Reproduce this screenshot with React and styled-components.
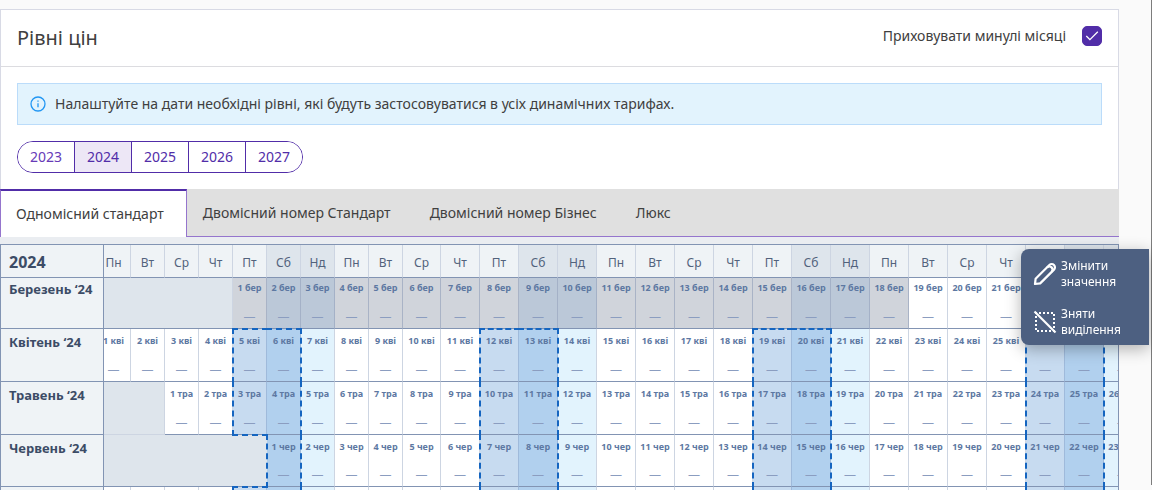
import React, { useLayoutEffect, useRef, useState } from "react";
import styled, { createGlobalStyle, css } from "styled-components";

const GlobalStyle = createGlobalStyle`
  * { box-sizing: border-box; }
  html, body { margin: 0; padding: 0; }
  body {
    background: #fafafa;
    color: #404040;
    font-family: "Noto Sans", "Open Sans", sans-serif;
    font-size: 14px;
    line-height: 20px;
  }
  button { font: inherit; cursor: pointer; }
`;

const line = "#8294b3";
const softLine = "#cdd5e2";
const purple = "#512da8";
const dash = "#1565c0";

const Page = styled.div`
  position: relative;
  height: 100vh;
  overflow: hidden;
  padding: 9px 33px 0 0;
  &::after {
    content: "";
    position: absolute;
    top: 0;
    right: 0;
    bottom: 5px;
    width: 1px;
    background: #7d7d7d;
  }
`;

const Panel = styled.section`
  background: #fff;
  border: 1px solid #d8dae5;
  border-bottom: 0;
`;

const PanelHeader = styled.header`
  display: flex;
  align-items: center;
  justify-content: space-between;
  height: 57px;
  padding: 0 16px;
  border-bottom: 1px solid #dcdce0;
`;

const Title = styled.h1`
  margin: 0;
  font-size: 20px;
  line-height: 28px;
  font-weight: 400;
`;

const CheckLabel = styled.label`
  display: flex;
  align-items: center;
  gap: 16px;
  padding-bottom: 4px;
`;

const CheckBox = styled.span`
  position: relative;
  display: flex;
  width: 20px;
  height: 20px;
  svg {
    position: absolute;
    inset: 0;
    pointer-events: none;
  }
`;

const CheckInput = styled.input`
  appearance: none;
  width: 20px;
  height: 20px;
  margin: 0;
  border: 1px solid ${purple};
  border-radius: 5px;
  background: #fff;
  &:checked { background: ${purple}; }
`;

const PanelBody = styled.div`
  display: flex;
  flex-direction: column;
  align-items: flex-start;
  gap: 16px;
  padding: 16px;
`;

const Notice = styled.p`
  display: flex;
  align-items: center;
  gap: 8px;
  align-self: stretch;
  margin: 0;
  min-height: 42px;
  padding: 0 11px;
  background: #e2f3fd;
  border: 1px solid #bbdcfa;
`;

const Years = styled.div`
  display: flex;
  height: 32px;
  border: 1px solid ${purple};
  border-radius: 16px;
  overflow: hidden;
`;

const YearButton = styled.button`
  width: 57px;
  padding: 0;
  border: 0;
  border-right: 1px solid ${purple};
  background: ${(p) => (p.$active ? "#ede7f6" : "#fff")};
  color: ${(p) => (p.$dim ? "#673ab7" : purple)};
  &:last-child { border-right: 0; width: 56px; }
`;

const Tabs = styled.div`
  display: flex;
  height: 48px;
  margin: 0 -1px;
  background: #e0e0e0;
`;

const Tab = styled.button`
  padding: 0 23px 0 16px;
  border: 0;
  border-bottom: 1px solid #9575cd;
  background: transparent;
  color: #404040;
  white-space: nowrap;
  ${(p) =>
    p.$active &&
    css`
      padding: 0 22px 0 15px;
      background: #fff;
      border: 1px solid #9575cd;
      border-top: 2px solid ${purple};
      border-bottom: 0;
    `}
`;

const TabRest = styled.div`
  flex: 1;
  border-bottom: 1px solid #9575cd;
`;

const Calendar = styled.div`
  margin: 0 -1px;
  padding-top: 7px;
  background: #eaedf1;
`;

const Scroller = styled.div`
  overflow: hidden;
  border: 1px solid ${line};
  border-bottom: 0;
`;

const Grid = styled.table`
  table-layout: fixed;
  width: max-content;
  border-collapse: separate;
  border-spacing: 0;
  background: #fff;
`;

const Col = styled.col`
  width: ${(p) => p.$width}px;
`;

const Corner = styled.th`
  position: sticky;
  left: 0;
  z-index: 2;
  height: 33px;
  padding: 2px 8px 0;
  background: #eff3f6;
  border-right: 1px solid ${line};
  border-bottom: 1px solid ${line};
  color: #3c4c66;
  font-size: 16px;
  text-align: left;
`;

const WeekDay = styled.th`
  height: 33px;
  padding: 4px 0 0;
  background: ${(p) => (p.$weekend ? "#dee5ec" : "#eff3f6")};
  border-right: 1px solid ${softLine};
  border-bottom: 1px solid ${line};
  color: #52627c;
  font-size: 12px;
  font-weight: 400;
`;

const MonthName = styled.th`
  position: sticky;
  left: 0;
  z-index: 2;
  height: ${(p) => p.$height}px;
  padding: ${(p) => p.$top}px 0 0 8px;
  background: #eff3f6;
  border-right: 1px solid ${line};
  border-bottom: 1px solid ${line};
  color: #3c4c66;
  font-size: 13px;
  line-height: 20px;
  text-align: left;
  vertical-align: top;
  white-space: nowrap;
`;

const Blank = styled.td`
  padding: 0;
  background: #dee5ec;
  border-right: ${(p) => (p.$edge ? 1 : 0)}px solid ${softLine};
  border-bottom: 1px solid ${(p) => (p.$soft ? softLine : line)};
`;

const tones = {
  plain: "#fff",
  sunday: "#e2f3fd",
  past: "#d0d4db",
  pastWeekend: "#bbc8d8",
  picked: "#c7dbf0",
  pickedWeekend: "#b1d0ee",
};
const toneLines = {
  plain: softLine,
  sunday: softLine,
  past: "#a9b3c6",
  pastWeekend: "#a4b1c7",
  picked: "#9fbadb",
  pickedWeekend: "#9fbadb",
};

const Day = styled.td`
  position: relative;
  height: ${(p) => p.$height}px;
  padding: ${(p) => p.$top}px 0 3px;
  background: ${(p) => tones[p.$tone]};
  border-right: 1px solid ${(p) => toneLines[p.$tone]};
  border-bottom: 1px solid ${line};
  text-align: center;
  vertical-align: top;
  &::after {
    content: "";
    position: absolute;
    z-index: 1;
    inset: -1px -2px -2px -1px;
    pointer-events: none;
    border: 0 dashed ${dash};
    border-left-width: ${(p) => (p.$left ? 2 : 0)}px;
    border-right-width: ${(p) => (p.$right ? 2 : 0)}px;
    border-top-width: ${(p) => (p.$first ? 2 : 0)}px;
    border-bottom-width: ${(p) => (p.$last ? 2 : 0)}px;
  }
`;

const DayButton = styled.button`
  display: flex;
  flex-direction: column;
  align-items: center;
  justify-content: space-between;
  width: 100%;
  height: ${(p) => p.$height}px;
  padding: 0;
  border: 0;
  background: none;
  color: #5d78a2;
  font-size: 9px;
  line-height: 12px;
  font-weight: 700;
  white-space: nowrap;
`;

const Level = styled.span`
  color: #8b9dc0;
  font-size: 12px;
  line-height: 16px;
  font-weight: 400;
`;

const Menu = styled.aside`
  position: absolute;
  z-index: 3;
  top: 249px;
  right: 3px;
  display: flex;
  flex-direction: column;
  gap: 16px;
  width: 128px;
  padding: 9px 0 7px 12px;
  background: #4d6081;
  border-radius: 8px 0 0 8px;
  box-shadow: 0 4px 16px rgba(0, 0, 0, 0.3);
`;

const MenuButton = styled.button`
  display: flex;
  align-items: center;
  gap: 4px;
  padding: 0;
  border: 0;
  background: none;
  color: #fff;
  font-size: 12px;
  line-height: 16px;
  text-align: left;
  svg { flex: none; }
`;

const names = ["Пн", "Вт", "Ср", "Чт", "Пт", "Сб", "Нд"];
const columns = Array.from({ length: 28 }, (_, i) => ({
  name: names[i % 7],
  weekday: i % 7,
  width: i < 9 ? 34 : i === 9 ? 38 : 39,
}));

const months = [
  { label: "Березень ‘24", short: "бер", start: 4, days: 31, past: 18, height: 51, top: 4 },
  { label: "Квітень ‘24", short: "кві", start: 0, days: 30, past: 0, height: 53, top: 6 },
  { label: "Травень ‘24", short: "тра", start: 2, days: 31, past: 0, height: 53, top: 6 },
  { label: "Червень ‘24", short: "чер", start: 5, days: 30, past: 0, height: 52, top: 6 },
  { label: "Липень ‘24", short: "лип", start: 0, days: 31, past: 0, height: 53, top: 6 },
];

const exists = (row, col) => {
  const m = months[row];
  return Boolean(m) && col >= m.start && col < m.start + m.days;
};
const isPicked = (row, col) =>
  row > 0 && exists(row, col) && (col % 7 === 4 || col % 7 === 5);

function toneOf(month, row, col) {
  const day = col - month.start + 1;
  const weekday = col % 7;
  if (day <= month.past) return weekday > 4 ? "pastWeekend" : "past";
  if (isPicked(row, col)) return weekday === 5 ? "pickedWeekend" : "picked";
  return weekday > 4 ? "sunday" : "plain";
}

function MonthRow({ month, row }) {
  return (
    <tr>
      <MonthName scope="row" $height={month.height} $top={month.top - 3}>
        {month.label}
      </MonthName>
      {month.start > 0 && (
        <Blank colSpan={month.start} $edge={row !== 3} $soft={row === 2} />
      )}
      {columns.slice(month.start, month.start + month.days).map((c, i) => {
        const col = month.start + i;
        const picked = isPicked(row, col);
        return (
          <Day
            key={col}
            $height={month.height}
            $top={month.top}
            $tone={toneOf(month, row, col)}
            $left={picked && !isPicked(row, col - 1)}
            $right={picked && !isPicked(row, col + 1)}
            $first={picked && !isPicked(row - 1, col)}
            $last={picked && !isPicked(row + 1, col) && row < months.length - 1}
          >
            <DayButton type="button" $height={month.height - month.top - 4}>
              <span>
                {i + 1} {month.short}
              </span>
              <Level>—</Level>
            </DayButton>
          </Day>
        );
      })}
    </tr>
  );
}

function PriceCalendar() {
  const scroller = useRef(null);
  useLayoutEffect(() => {
    scroller.current.scrollLeft = 7;
  }, []);
  return (
    <Calendar>
      <Scroller ref={scroller}>
        <Grid>
          <colgroup>
            <Col $width={103} />
            {columns.map((c, i) => (
              <Col key={i} $width={c.width} />
            ))}
          </colgroup>
          <thead>
            <tr>
              <Corner scope="col">2024</Corner>
              {columns.map((c, i) => (
                <WeekDay key={i} scope="col" $weekend={c.weekday > 4}>
                  {c.name}
                </WeekDay>
              ))}
            </tr>
          </thead>
          <tbody>
            {months.map((m, row) => (
              <MonthRow key={m.short} month={m} row={row} />
            ))}
          </tbody>
        </Grid>
      </Scroller>
    </Calendar>
  );
}

const InfoIcon = () => (
  <svg width="18" height="18" viewBox="0 0 18 18" fill="none" stroke="#2196f3" strokeWidth="1.3">
    <circle cx="9" cy="9" r="7" />
    <path d="M9 8.2v4M9 5.4v1.4" />
  </svg>
);

const PencilIcon = () => (
  <svg width="24" height="24" viewBox="0 0 24 24" fill="none" stroke="#fff" strokeWidth="2.2" strokeLinejoin="round">
    <path d="M2 22l.6-5.2L16.4 3a3.2 3.2 0 0 1 4.6 4.6L7.2 21.4z" />
    <path d="M14.2 5.4a3 3 0 0 1 4.4 4.4" />
  </svg>
);

const DeselectIcon = () => (
  <svg width="24" height="24" viewBox="0 0 24 24" fill="none" stroke="#fff" strokeWidth="2">
    <path d="M3 3h18v18H3z" strokeDasharray="2 2" strokeDashoffset="1" />
    <path d="M1.5 1.5l21 21" strokeWidth="2.2" />
  </svg>
);

export default function App() {
  const [hidePast, setHidePast] = useState(true);
  const [year, setYear] = useState(2024);
  const [tab, setTab] = useState(0);
  const rooms = ["Одномісний стандарт", "Двомісний номер Стандарт", "Двомісний номер Бізнес", "Люкс"];
  return (
    <Page>
      <GlobalStyle />
      <Panel>
        <PanelHeader>
          <Title>Рівні цін</Title>
          <CheckLabel>
            Приховувати минулі місяці
            <CheckBox>
              <CheckInput
                type="checkbox"
                checked={hidePast}
                onChange={(e) => setHidePast(e.target.checked)}
              />
              <svg viewBox="0 0 20 20" fill="none" stroke="#fff" strokeWidth="1.3">
                <path d="M4.3 10l3.6 3.6L15.8 5.8" />
              </svg>
            </CheckBox>
          </CheckLabel>
        </PanelHeader>
        <PanelBody>
          <Notice>
            <InfoIcon />
            Налаштуйте на дати необхідні рівні, які будуть застосовуватися в усіх динамічних тарифах.
          </Notice>
          <Years>
            {[2023, 2024, 2025, 2026, 2027].map((y) => (
              <YearButton
                key={y}
                type="button"
                $active={y === year}
                $dim={y === 2023}
                onClick={() => setYear(y)}
              >
                {y}
              </YearButton>
            ))}
          </Years>
        </PanelBody>
        <Tabs role="tablist">
          {rooms.map((name, i) => (
            <Tab
              key={name}
              type="button"
              role="tab"
              aria-selected={i === tab}
              $active={i === tab}
              onClick={() => setTab(i)}
            >
              {name}
            </Tab>
          ))}
          <TabRest />
        </Tabs>
        <PriceCalendar />
      </Panel>
      <Menu>
        <MenuButton type="button">
          <PencilIcon />
          <span>Змінити значення</span>
        </MenuButton>
        <MenuButton type="button">
          <DeselectIcon />
          <span>Зняти виділення</span>
        </MenuButton>
      </Menu>
    </Page>
  );
}
